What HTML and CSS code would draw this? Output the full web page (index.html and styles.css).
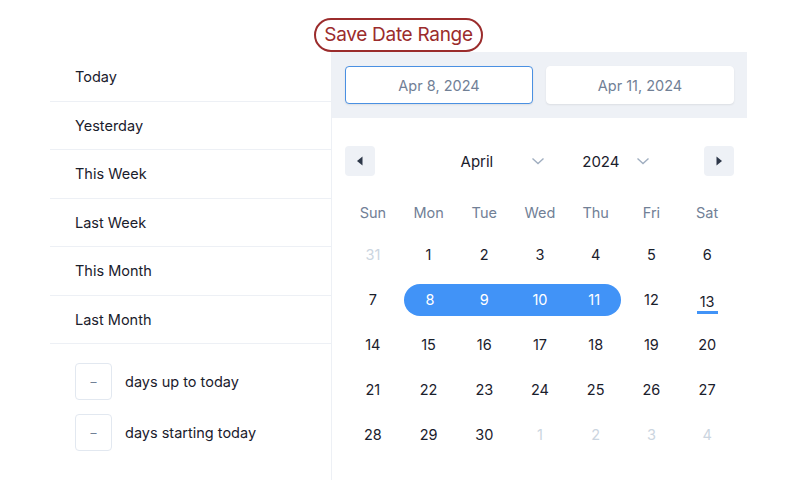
FILE: index.html
```html
<!DOCTYPE html>
<html>
<head>
<meta charset="utf-8">
<link rel="stylesheet" href="styles.css">
</head>
<body>
<div class="page">
  <div class="title-wrap"><h1 class="title">Save Date Range</h1></div>
  <div class="picker">
    <div class="presets">
      <div class="preset">Today</div>
      <div class="preset">Yesterday</div>
      <div class="preset">This Week</div>
      <div class="preset">Last Week</div>
      <div class="preset">This Month</div>
      <div class="preset">Last Month</div>
      <div class="relative">
        <div class="rel-row"><div class="rel-box">–</div><span>days up to today</span></div>
        <div class="rel-row"><div class="rel-box">–</div><span>days starting today</span></div>
      </div>
    </div>
    <div class="calendar">
      <div class="inputs">
        <div class="date-input active">Apr 8, 2024</div>
        <div class="date-input">Apr 11, 2024</div>
      </div>
      <div class="nav">
        <button class="nav-btn"><svg width="10" height="12" viewBox="0 0 10 12"><path d="M7.5 1.5 L2 6 L7.5 10.5 Z" fill="#2d3748"/></svg></button>
        <div class="selects">
          <div class="sel month">April<svg width="14" height="8" viewBox="0 0 14 8"><path d="M1.5 1.5 L7 6.5 L12.5 1.5" fill="none" stroke="#a0aec0" stroke-width="1.4"/></svg></div>
          <div class="sel year">2024<svg width="14" height="8" viewBox="0 0 14 8"><path d="M1.5 1.5 L7 6.5 L12.5 1.5" fill="none" stroke="#a0aec0" stroke-width="1.4"/></svg></div>
        </div>
        <button class="nav-btn"><svg width="10" height="12" viewBox="0 0 10 12"><path d="M2.5 1.5 L8 6 L2.5 10.5 Z" fill="#2d3748"/></svg></button>
      </div>
      <div class="grid">
        <div class="wd">Sun</div><div class="wd">Mon</div><div class="wd">Tue</div><div class="wd">Wed</div><div class="wd">Thu</div><div class="wd">Fri</div><div class="wd">Sat</div>
        <div class="day muted">31</div><div class="day">1</div><div class="day">2</div><div class="day">3</div><div class="day">4</div><div class="day">5</div><div class="day">6</div>
        <div class="day">7</div><div class="day sel-day start">8</div><div class="day sel-day">9</div><div class="day sel-day">10</div><div class="day sel-day end">11</div><div class="day">12</div><div class="day today"><span>13</span></div>
        <div class="day">14</div><div class="day">15</div><div class="day">16</div><div class="day">17</div><div class="day">18</div><div class="day">19</div><div class="day">20</div>
        <div class="day">21</div><div class="day">22</div><div class="day">23</div><div class="day">24</div><div class="day">25</div><div class="day">26</div><div class="day">27</div>
        <div class="day">28</div><div class="day">29</div><div class="day">30</div><div class="day muted">1</div><div class="day muted">2</div><div class="day muted">3</div><div class="day muted">4</div>
      </div>
    </div>
  </div>
</div>
</body>
</html>
```

FILE: styles.css
```css
* { box-sizing: border-box; }
body {
  margin: 0;
  background: #fff;
  font-family: Inter, "Open Sans", sans-serif;
  color: #1a202c;
}
.page {
  width: 802px;
  height: 480px;
  overflow: hidden;
}
.title-wrap {
  display: flex;
  justify-content: center;
  padding-top: 18px;
  padding-right: 5px;
}
.title {
  margin: 0;
  height: 34px;
  padding: 0 8px;
  border: 2px solid #9b2c2c;
  border-radius: 17px;
  color: #9b2c2c;
  font-size: 19px;
  font-weight: 400;
  line-height: 30px;
  letter-spacing: -0.3px;
}
.picker {
  display: flex;
  margin-left: 50px;
  width: 697px;
  height: 428px;
}
.presets {
  width: 282px;
  padding-top: 1px;
  border-right: 1px solid #edf0f5;
}
.preset {
  height: 48.5px;
  padding-left: 25px;
  border-bottom: 1px solid #edf0f5;
  font-size: 14.5px;
  line-height: 48px;
  color: #1a202c;
}
.relative {
  padding: 19px 0 0 25px;
  display: flex;
  flex-direction: column;
  gap: 14px;
}
.rel-row {
  display: flex;
  align-items: center;
  gap: 13px;
  font-size: 14.5px;
  color: #1a202c;
}
.rel-box {
  width: 37px;
  height: 37px;
  border: 1px solid #e2e8f0;
  border-radius: 4px;
  display: flex;
  align-items: center;
  justify-content: center;
  color: #718096;
  font-size: 12px;
}
.calendar {
  width: 415px;
}
.inputs {
  background: #eef1f6;
  padding: 14px 13px;
  display: flex;
  gap: 13px;
}
.date-input {
  flex: 1;
  height: 38px;
  background: #fff;
  border-radius: 4px;
  border: 1px solid #fff;
  box-shadow: 0 1px 2px rgba(0,0,0,0.08);
  display: flex;
  align-items: center;
  justify-content: center;
  font-size: 14.5px;
  color: #718096;
}
.date-input.active {
  border-color: #4a90e2;
}
.nav {
  display: flex;
  align-items: center;
  justify-content: space-between;
  padding: 28px 13px 0;
}
.nav-btn {
  width: 30px;
  height: 30px;
  border: none;
  border-radius: 4px;
  background: #eef1f6;
  display: flex;
  align-items: center;
  justify-content: center;
  padding: 0;
}
.selects {
  display: flex;
  gap: 37px;
  margin-left: 32px;
}
.sel {
  display: flex;
  align-items: center;
  font-size: 15px;
  color: #1a202c;
}
.month { gap: 38px; }
.year { gap: 17px; }
.grid {
  display: grid;
  grid-template-columns: repeat(7, 1fr);
  padding: 20px 12px 0 13px;
}
.wd {
  height: 36px;
  text-align: center;
  font-size: 14.5px;
  color: #718096;
  line-height: 34px;
}
.day {
  height: 45px;
  display: flex;
  align-items: center;
  justify-content: center;
  font-size: 14.5px;
  color: #1a202c;
}
.day.muted { color: #cbd5e0; }
.sel-day {
  color: #fff;
  background: #4193f7;
  height: 32px;
  margin: 6.5px 0;
}
.sel-day.start { border-radius: 16px 0 0 16px; margin-left: 3px; }
.sel-day.end { border-radius: 0 16px 16px 0; margin-right: 3px; }
.today span {
  border-bottom: 3px solid #4193f7;
  padding: 0 3px;
  line-height: 18px;
  margin-top: 8px;
}
```
